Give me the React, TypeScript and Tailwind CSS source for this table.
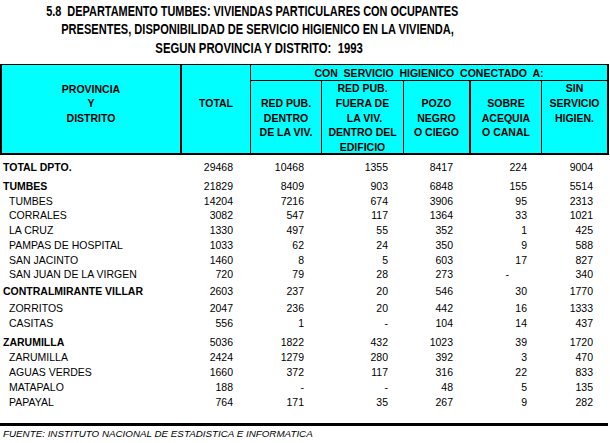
import React from "react";

type Row = { name: string; bold?: boolean; mt?: string; v: string[]; dashSobre?: boolean };

const rows: Row[] = [
  { name: "TOTAL DPTO.", bold: true, mt: "mt-[5px]", v: ["29468", "10468", "1355", "8417", "224", "9004"] },
  { name: "TUMBES", bold: true, mt: "mt-[4px]", v: ["21829", "8409", "903", "6848", "155", "5514"] },
  { name: "TUMBES", v: ["14204", "7216", "674", "3906", "95", "2313"] },
  { name: "CORRALES", v: ["3082", "547", "117", "1364", "33", "1021"] },
  { name: "LA CRUZ", v: ["1330", "497", "55", "352", "1", "425"] },
  { name: "PAMPAS DE HOSPITAL", v: ["1033", "62", "24", "350", "9", "588"] },
  { name: "SAN JACINTO", v: ["1460", "8", "5", "603", "17", "827"] },
  { name: "SAN JUAN DE LA VIRGEN", v: ["720", "79", "28", "273", "-", "340"], dashSobre: true },
  { name: "CONTRALMIRANTE VILLAR", bold: true, mt: "mt-[1.5px]", v: ["2603", "237", "20", "546", "30", "1770"] },
  { name: "ZORRITOS", mt: "mt-[2.75px]", v: ["2047", "236", "20", "442", "16", "1333"] },
  { name: "CASITAS", v: ["556", "1", "-", "104", "14", "437"] },
  { name: "ZARUMILLA", bold: true, mt: "mt-[4px]", v: ["5036", "1822", "432", "1023", "39", "1720"] },
  { name: "ZARUMILLA", mt: "mt-[1.15px]", v: ["2424", "1279", "280", "392", "3", "470"] },
  { name: "AGUAS VERDES", v: ["1660", "372", "117", "316", "22", "833"] },
  { name: "MATAPALO", v: ["188", "-", "-", "48", "5", "135"] },
  { name: "PAPAYAL", v: ["764", "171", "35", "267", "9", "282"] },
];

const colCls = [
  "w-[69px] pr-[18px]",
  "w-[71px] pr-[18px]",
  "w-[82px] pr-[16px]",
  "w-[67px] pr-[18px]",
  "w-[71px] pr-[15px]",
  "w-[65px] pr-[14px]",
];

export default function App() {
  return (
    <div className="w-[610px] h-[443px] bg-white text-black overflow-hidden font-['Liberation_Sans',Arial,sans-serif]">
      {/* Title */}
      <div className="h-[64px] pt-[1.5px] w-[515px] flex flex-col items-center font-bold text-[14px] leading-[18.5px]">
        <div className="whitespace-pre scale-x-[0.78] shrink-0 -translate-x-[5px]">5.8  DEPARTAMENTO TUMBES: VIVIENDAS PARTICULARES CON OCUPANTES</div>
        <div className="whitespace-pre scale-x-[0.79] shrink-0">PRESENTES, DISPONIBILIDAD DE SERVICIO HIGIENICO EN LA VIVIENDA,</div>
        <div className="whitespace-pre scale-x-[0.81] shrink-0 translate-x-[2px]">SEGUN PROVINCIA Y DISTRITO:  1993</div>
      </div>

      {/* Header */}
      <div className="w-[609px] h-[91px] flex border-l-2 border-r-2 border-t border-b-2 border-black bg-[#00ffff] font-bold text-[10.5px] leading-[14.75px] text-center">
        <div className="w-[180px] border-r-2 border-black pt-[16.5px]">
          <div>PROVINCIA</div>
          <div>Y</div>
          <div>DISTRITO</div>
        </div>
        <div className="w-[69px] border-r border-black pt-[30.5px]">TOTAL</div>
        <div className="flex-1 flex flex-col">
          <div className="h-[16px] border-b border-black pt-[1px] whitespace-pre">CON  SERVICIO  HIGIENICO  CONECTADO  A:</div>
          <div className="flex-1 flex">
            <div className="w-[71px] border-r border-black flex flex-col justify-center">
              <div>RED PUB.</div>
              <div>DENTRO</div>
              <div>DE LA VIV.</div>
            </div>
            <div className="w-[82px] border-r border-black flex flex-col justify-center">
              <div>RED PUB.</div>
              <div>FUERA DE</div>
              <div className="pl-[4px]">LA VIV.</div>
              <div>DENTRO DEL</div>
              <div>EDIFICIO</div>
            </div>
            <div className="w-[67px] border-r-2 border-black flex flex-col justify-center">
              <div>POZO</div>
              <div>NEGRO</div>
              <div>O CIEGO</div>
            </div>
            <div className="w-[71px] border-r border-black flex flex-col justify-center">
              <div>SOBRE</div>
              <div>ACEQUIA</div>
              <div>O CANAL</div>
            </div>
            <div className="flex-1 flex flex-col justify-start">
              <div>SIN</div>
              <div>SERVICIO</div>
              <div>HIGIEN.</div>
            </div>
          </div>
        </div>
      </div>

      {/* Data rows */}
      <div className="text-[10.5px] leading-[14.75px]">
        {rows.map((r, i) => (
          <div key={i} className={`flex h-[14.75px] ${r.mt ?? ""}`}>
            <div className={`w-[182px] whitespace-nowrap ${r.bold ? "font-bold pl-[3px]" : "pl-[9px]"}`}>{r.name}</div>
            {r.v.map((n, j) => (
              <div
                key={j}
                className={`text-right ${j === 4 && r.dashSobre ? "w-[71px] pr-[33px]" : colCls[j]}`}
              >
                {n}
              </div>
            ))}
          </div>
        ))}
      </div>

      {/* Footer */}
      <div className="mt-[14px] w-[608px] h-[3px] bg-black" />
      <div className="mt-[2px] pl-[3px] italic text-[9.8px] leading-[12px] whitespace-nowrap">
        FUENTE: INSTITUTO NACIONAL DE ESTADISTICA E INFORMATICA
      </div>
    </div>
  );
}
